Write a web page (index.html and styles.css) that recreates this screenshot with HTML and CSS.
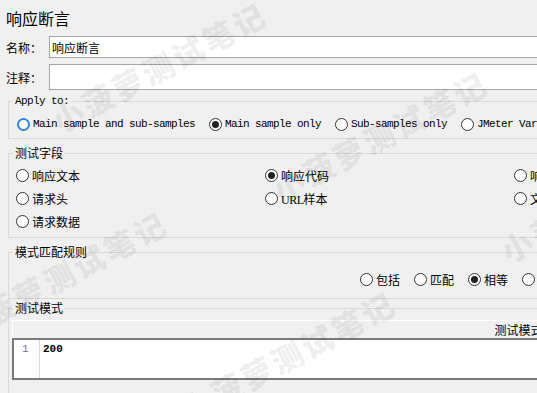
FILE: index.html
```html
<!DOCTYPE html>
<html lang="zh-CN">
<head>
    <meta charset="UTF-8">
    <title>响应断言</title>
    <link rel="stylesheet" href="styles.css">
</head>
<body>
<div class="page">
    <div class="title">响应断言</div>

    <div class="field-row name-row">
        <label class="field-label">名称：</label>
        <div class="field-input">响应断言</div>
    </div>
    <div class="field-row comment-row">
        <label class="field-label">注释：</label>
        <div class="field-input"></div>
    </div>

    <!-- 作用范围 -->
    <fieldset class="group apply-group">
        <legend class="mono">Apply to:</legend>
        <div class="opt-row">
            <span class="opt"><i class="radio focus"></i><span class="mono">Main sample and sub-samples</span></span>
            <span class="opt"><i class="radio checked"></i><span class="mono">Main sample only</span></span>
            <span class="opt"><i class="radio"></i><span class="mono">Sub-samples only</span></span>
            <span class="opt"><i class="radio"></i><span class="mono">JMeter Variable Name to use</span></span>
        </div>
    </fieldset>

    <!-- 测试字段 -->
    <fieldset class="group field-group">
        <legend>测试字段</legend>
        <div class="opt-grid">
            <span class="opt"><i class="radio"></i><span>响应文本</span></span>
            <span class="opt"><i class="radio checked"></i><span>响应代码</span></span>
            <span class="opt"><i class="radio"></i><span>响应信息</span></span>
            <span class="opt"><i class="radio"></i><span>响应头</span></span>
            <span class="opt"><i class="radio"></i><span>请求头</span></span>
            <span class="opt"><i class="radio"></i><span><span class="serif">URL</span>样本</span></span>
            <span class="opt"><i class="radio"></i><span>文档(文本)</span></span>
            <span class="opt"><i class="check"></i><span>忽略状态</span></span>
            <span class="opt"><i class="radio"></i><span>请求数据</span></span>
        </div>
    </fieldset>

    <!-- 模式匹配规则 -->
    <fieldset class="group rule-group">
        <legend>模式匹配规则</legend>
        <div class="opt-row rule-row">
            <span class="opt"><i class="radio"></i><span>包括</span></span>
            <span class="opt"><i class="radio"></i><span>匹配</span></span>
            <span class="opt"><i class="radio checked"></i><span>相等</span></span>
            <span class="opt"><i class="radio"></i><span>字符串</span></span>
            <span class="opt"><i class="check"></i><span>否</span></span>
            <span class="opt"><i class="check"></i><span>或者</span></span>
        </div>
    </fieldset>

    <!-- 测试模式 -->
    <fieldset class="group pattern-group">
        <legend>测试模式</legend>
        <div class="table-head">测试模式</div>
        <div class="editor">
            <div class="gutter">1</div>
            <div class="code">200</div>
        </div>
    </fieldset>

    <!-- 水印 -->
    <span class="wm wm1">小菠萝测试笔记</span>
    <span class="wm wm2">小菠萝测试笔记</span>
    <span class="wm wm3">小菠萝测试笔记</span>
    <span class="wm wm4">小菠萝测试笔记</span>
    <span class="wm wm5">小菠萝测试笔记</span>
</div>
</body>
</html>
```

FILE: styles.css
```css
/* 基本背景和文字 */
html, body {
    margin: 0;
    overflow: hidden;
    background-color: #f0f0f0;
}

body {
    color: #000;
    font-family: "Noto Sans CJK SC", "Liberation Sans", sans-serif;
    font-size: 12px;
}

.page {
    position: relative;
    width: 1036px;
}

.mono {
    font-family: "Liberation Mono", "Noto Sans CJK SC", monospace;
    font-size: 11px;
    letter-spacing: -0.6px;
}

.serif {
    font-family: "Liberation Serif", serif;
    font-size: 12px;
    letter-spacing: -0.5px;
}

.title {
    padding: 8px 0 0 6px;
    height: 20px;
    line-height: 20px;
    font-size: 16px;
}

/* 名称 / 注释 */
.field-row {
    display: flex;
    align-items: center;
}

.name-row {
    margin-top: 8px;
    height: 22px;
}

.comment-row {
    margin-top: 6px;
    height: 26px;
}

.field-label {
    width: 43px;
    padding-left: 6px;
    box-sizing: content-box;
}

.field-input {
    flex: 1;
    height: 100%;
    box-sizing: border-box;
    border: 1px solid #a5a5a5;
    background-color: #fff;
    padding-left: 2px;
    display: flex;
    align-items: center;
}

/* 分组框 */
.group {
    margin: 0 8px;
    border: 1px solid #d9d9d9;
    padding: 0 3px;
    min-width: 0;
}

.group legend {
    margin-left: 1px;
    padding: 0 2px;
    line-height: 14px;
    height: 14px;
}

.apply-group {
    margin-top: 4px;
    padding-top: 7px;
    padding-bottom: 5px;
}

.field-group {
    margin-top: 7px;
    padding-top: 4px;
    padding-bottom: 4px;
}

.rule-group {
    margin-top: 7px;
    padding-top: 11px;
    padding-bottom: 10px;
}

.pattern-group {
    margin-top: 2px;
    padding-top: 5px;
    padding-bottom: 30px;
}

/* 单选项 */
.opt {
    display: flex;
    align-items: center;
    gap: 3px;
    height: 18px;
    white-space: nowrap;
}

.radio, .check {
    display: inline-block;
    width: 13px;
    height: 13px;
    box-sizing: border-box;
    border: 1px solid #333;
    background-color: #fff;
    flex: none;
}

.radio {
    border-radius: 50%;
    position: relative;
}

.radio.focus {
    border: 2px solid #3585d6;
}

.radio.checked::after {
    content: "";
    position: absolute;
    left: 2px;
    top: 2px;
    width: 7px;
    height: 7px;
    border-radius: 50%;
    background-color: #222;
}

.opt-row {
    display: flex;
    gap: 14px;
    padding-left: 5px;
}

.rule-row {
    padding-left: 348px;
}

.opt-grid {
    display: grid;
    grid-template-columns: repeat(4, 249px);
    grid-auto-rows: 23px;
    padding-left: 4px;
}

.opt-grid .opt {
    height: 23px;
}

/* 测试模式表格 */
.table-head {
    height: 18px;
    line-height: 18px;
    text-align: center;
    border-top: 1px solid #fff;
    border-left: 1px solid #fff;
    box-sizing: border-box;
}

.editor {
    display: flex;
    height: 42px;
    box-sizing: border-box;
    border: 2px solid #7a7a7a;
    background-color: #fff;
}

.gutter {
    width: 26px;
    border-right: 1px solid #d8d8d8;
    padding-left: 8px;
    box-sizing: border-box;
    color: #7a6f9a;
    font-family: "Liberation Mono", monospace;
    font-size: 11px;
    line-height: 14px;
    padding-top: 2px;
}

.code {
    padding: 2px 0 0 3px;
    font-family: "Liberation Mono", monospace;
    font-size: 11px;
    font-weight: bold;
    line-height: 14px;
}

/* 水印 */
.wm {
    position: absolute;
    width: 238px;
    height: 40px;
    line-height: 40px;
    text-align: center;
    font-size: 31px;
    font-weight: 900;
    letter-spacing: 3px;
    white-space: nowrap;
    color: rgba(0, 0, 0, 0.08);
    transform: rotate(-28deg);
    pointer-events: none;
}

.wm1 { left: 40px;  top: 47px; }
.wm2 { left: 261px; top: 116px; }
.wm3 { left: 169px; top: 336px; }
.wm4 { left: -59px; top: 256px; }
.wm5 { left: 489px; top: 177px; }
```
